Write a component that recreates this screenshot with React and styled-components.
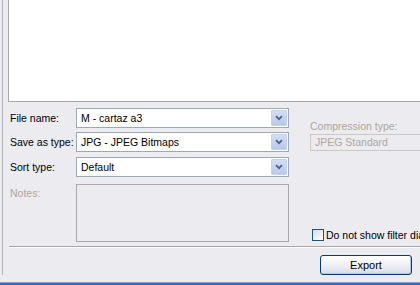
import styled, { createGlobalStyle } from 'styled-components';

const GlobalStyle = createGlobalStyle`
  html, body {
    margin: 0;
    padding: 0;
    background: #ecebf0;
  }
  * {
    box-sizing: border-box;
  }
`;

const Dialog = styled.div`
  width: 420px;
  height: 285px;
  overflow: hidden;
  display: flex;
  flex-direction: column;
  background: #ecebf0;
  font-family: 'Liberation Sans', Arial, sans-serif;
  font-size: 10.5px;
  color: #000;
`;

const Frame = styled.div`
  height: 275px;
  margin-left: 2px;
  border-left: 1px solid #b5b5bd;
  display: flex;
  flex-direction: column;
`;

const ListView = styled.div`
  height: 102px;
  margin-left: 5px;
  margin-right: -10px;
  background: #fff;
  border-left: 1px solid #a9a8ad;
  border-bottom: 1px solid #a9a8ad;
`;

const Body = styled.div`
  display: flex;
  padding: 6px 0 0 7px;
`;

const LeftCol = styled.div`
  width: 279px;
  display: flex;
  flex-direction: column;
  gap: 4.5px;
`;

const Field = styled.div`
  display: grid;
  grid-template-columns: 66px 213px;
  align-items: ${(p) => (p.$top ? 'start' : 'center')};
  margin-top: ${(p) => p.$gap || 0}px;
`;

const Label = styled.span`
  color: ${(p) => (p.$disabled ? '#aca899' : '#000')};
  padding-top: ${(p) => (p.$top ? 3 : 0)}px;
  white-space: nowrap;
`;

const Combo = styled.div`
  height: 20px;
  display: flex;
  align-items: stretch;
  background: #fff;
  border: 1px solid #9ea8b6;
  padding: 1px;
`;

const ComboText = styled.span`
  flex: 1;
  display: flex;
  align-items: center;
  padding-left: 3px;
  white-space: nowrap;
`;

const DropButton = styled.span`
  width: 16px;
  display: flex;
  align-items: center;
  justify-content: center;
  background: linear-gradient(#d3def6, #b9c9ec);
  border: 1px solid #c2d1f3;
  border-radius: 1px;
`;

const NotesBox = styled.div`
  height: 58px;
  border: 1px solid #a9a8ad;
`;

const RightCol = styled.div`
  flex: 1;
  margin-left: 21px;
  margin-right: -20px;
  display: flex;
  flex-direction: column;
`;

const SideLabel = styled.span`
  margin-top: 12px;
  line-height: 12px;
  color: #aca899;
  white-space: nowrap;
`;

const DisabledBox = styled.div`
  margin-top: 2px;
  height: 17px;
  display: flex;
  align-items: center;
  padding-left: 4px;
  border: 1px solid #cbc8bd;
  color: #aca899;
  white-space: nowrap;
`;

const CheckRow = styled.label`
  margin-top: auto;
  margin-bottom: 1px;
  display: flex;
  align-items: center;
  gap: 2px;
  margin-left: 2px;
  height: 12px;
  white-space: nowrap;
`;

const CheckBox = styled.span`
  width: 12px;
  height: 12px;
  flex: none;
  border: 1px solid #1c5180;
  background: linear-gradient(135deg, #dcdcd7, #fff);
`;

const Separator = styled.div`
  margin: 4px 0 0 6px;
  height: 2px;
  border-top: 1px solid #a6a5ab;
  border-bottom: 1px solid #fff;
`;

const Footer = styled.div`
  display: flex;
  justify-content: flex-end;
  padding: 7px 8px 0 0;
`;

const Button = styled.button`
  width: 92px;
  height: 20px;
  padding: 0;
  font: inherit;
  font-size: 11px;
  color: #000;
  border: 1px solid #003c74;
  border-radius: 3px;
  background: linear-gradient(#ffffff, #f2f2f6 45%, #d8dcea);
  box-shadow: inset -1px -1px 0 #b8c4e4;
`;

const Spacer = styled.div`
  flex: 1;
`;

const TaskEdge = styled.div`
  height: 3px;
  background: #3a6cc6;
  border-top: 1px solid #7a9ede;
`;

function Chevron() {
  return (
    <svg width="8" height="6" viewBox="0 0 8 6">
      <path d="M1 1.2 L4 4.2 L7 1.2" fill="none" stroke="#4d6185" strokeWidth="1.8" />
    </svg>
  );
}

function ComboField({ label, value }) {
  return (
    <Field>
      <Label>{label}</Label>
      <Combo>
        <ComboText>{value}</ComboText>
        <DropButton>
          <Chevron />
        </DropButton>
      </Combo>
    </Field>
  );
}

export default function App() {
  return (
    <>
      <GlobalStyle />
      <Dialog>
        <Frame>
          <ListView />
          <Body>
            <LeftCol>
              <ComboField label="File name:" value="M - cartaz a3" />
              <ComboField label="Save as type:" value="JPG - JPEG Bitmaps" />
              <ComboField label="Sort type:" value="Default" />
              <Field $top $gap={3}>
                <Label $disabled $top>
                  Notes:
                </Label>
                <NotesBox />
              </Field>
            </LeftCol>
            <RightCol>
              <SideLabel>Compression type:</SideLabel>
              <DisabledBox>JPEG Standard</DisabledBox>
              <CheckRow>
                <CheckBox />
                Do not show filter dialog
              </CheckRow>
            </RightCol>
          </Body>
          <Separator />
          <Footer>
            <Button>Export</Button>
          </Footer>
        </Frame>
        <Spacer />
        <TaskEdge />
      </Dialog>
    </>
  );
}
